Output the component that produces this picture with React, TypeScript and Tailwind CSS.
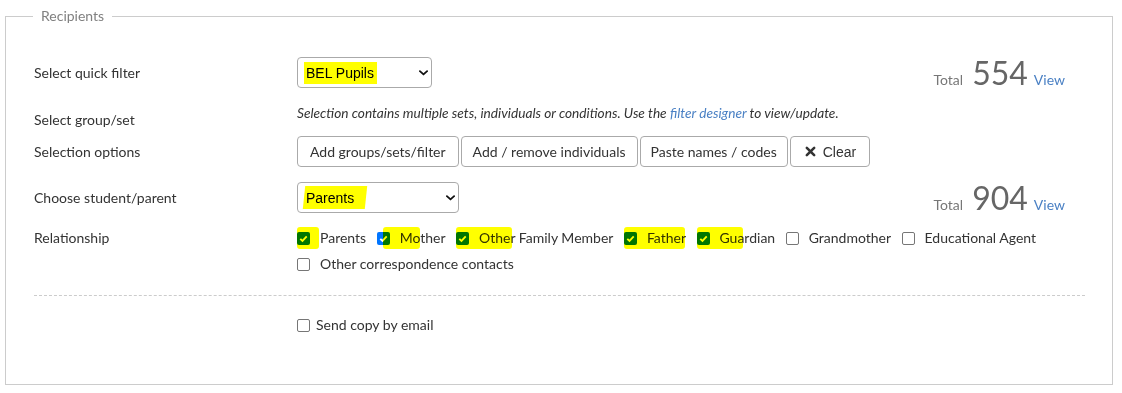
import type { ReactNode } from "react";

const RELATIONS: {
  label: string;
  checked?: boolean;
  hl?: [number, number];
}[] = [
  { label: "Parents", checked: true, hl: [0, 22] },
  { label: "Mother", checked: true, hl: [6, 37] },
  { label: "Other Family Member", checked: true, hl: [0, 56] },
  { label: "Father", checked: true, hl: [0, 61] },
  { label: "Guardian", checked: true, hl: [0, 46] },
  { label: "Grandmother" },
  { label: "Educational Agent" },
  { label: "Other correspondence contacts" },
];

export default function App() {
  return (
    <div className="bg-white w-[1122px] h-[393px] pl-[5px] pt-[6px] font-[Lato,'Liberation_Sans',sans-serif] text-[14px] leading-[20px] text-[#333]">
      <fieldset className="w-[1108px] border border-[#ccc] pl-[28px] pr-[27px] pb-[49px]">
        <legend className="-ml-px px-[8px] text-[#808080] leading-[20px]">
          Recipients
        </legend>

        <div className="mt-[31px] flex items-center h-[31px]">
          <div className="w-[263px]">Select quick filter</div>
          <Select width="w-[135px]">
            <span className="bg-[#ffff00] pl-[2px] pr-[3px] py-[1px]">BEL Pupils</span>
          </Select>
          <Total value="554" />
        </div>

        <div className="flex items-start h-[48px]">
          <div className="w-[263px] mt-[22px]">Select group/set</div>
          <div className="mt-[15px] text-[13.7px] italic">
            Selection contains multiple sets, individuals or conditions. Use the{" "}
            <a className="text-[#4a80c4]">filter designer</a> to view/update.
          </div>
        </div>

        <div className="flex items-center h-[31px]">
          <div className="w-[263px]">Selection options</div>
          <div className="flex gap-[2px]">
            <Button className="px-[12px]">Add groups/sets/filter</Button>
            <Button className="px-[11px]">Add / remove individuals</Button>
            <Button className="px-[10px]">Paste names / codes</Button>
            <Button className="px-[12px]">
              <span className="flex items-center gap-[7px] font-['Liberation_Sans',Arial,sans-serif] pl-[2px] pr-[1px]">
                <svg viewBox="0 0 12 12" className="w-[11px] h-[11px]">
                  <path
                    d="M2 2l8 8M10 2l-8 8"
                    stroke="#333"
                    strokeWidth={2.8}
                    strokeLinecap="round"
                  />
                </svg>
                Clear
              </span>
            </Button>
          </div>
        </div>

        <div className="mt-[15px] flex items-center h-[31px]">
          <div className="w-[263px]">Choose student/parent</div>
          <Select width="w-[162px]">
            <span className="bg-[#ffff00] pl-[2px] pr-[12px] pt-[2px] pb-[1px] -skew-x-6 inline-block">
              <span className="inline-block skew-x-6">Parents</span>
            </span>
          </Select>
          <Total value="904" />
        </div>

        <div className="mt-[12px] flex items-start">
          <div className="w-[263px] leading-[26px]">Relationship</div>
          <div className="flex-1 flex flex-wrap">
            {RELATIONS.map((r) => (
              <label
                key={r.label}
                className="relative h-[26px] inline-flex items-center mr-[10.5px]"
              >
                <Box checked={r.checked} />
                <span className="ml-[10px]">{r.label}</span>
                {r.hl && (
                  <span
                    className="absolute top-[2px] h-[22px] bg-[#ffff00] mix-blend-multiply rounded-[3px]"
                    style={{ left: r.hl[0], width: r.hl[1] }}
                  />
                )}
              </label>
            ))}
          </div>
        </div>

        <div className="mt-[18px] border-t border-dashed border-[#ccc]" />

        <div className="mt-[19px] h-[20px] pl-[263px] flex items-center">
          <Box />
          <span className="ml-[6px]">Send copy by email</span>
        </div>
      </fieldset>
    </div>
  );
}

function Select({ width, children }: { width: string; children: ReactNode }) {
  return (
    <div
      className={`${width} h-[31px] border border-[#aaa] rounded-[4px] flex items-center pl-[6px] pr-[3px] font-['Liberation_Sans',Arial,sans-serif] text-black`}
    >
      {children}
      <svg viewBox="0 0 10 6" className="ml-auto w-[9px] h-[6px]">
        <path
          d="M1 1l4 3.6 4-3.6"
          fill="none"
          stroke="#111"
          strokeWidth={2}
          strokeLinecap="round"
          strokeLinejoin="round"
        />
      </svg>
    </div>
  );
}

function Button({
  className,
  children,
}: {
  className: string;
  children: ReactNode;
}) {
  return (
    <button
      type="button"
      className={`h-[31px] ${className} border border-[#aaa] rounded-[4px] bg-white text-[#333] flex items-center`}
    >
      {children}
    </button>
  );
}

function Total({ value }: { value: string }) {
  return (
    <div className="ml-auto mr-[20px] flex items-baseline">
      <span className="text-[#777]">Total</span>
      <span className="ml-[9px] text-[32px] leading-[34px] text-[#666]">{value}</span>
      <a className="ml-[6px] text-[#4a80c4]">View</a>
    </div>
  );
}

function Box({ checked }: { checked?: boolean }) {
  if (checked) {
    return (
      <span className="w-[13px] h-[13px] rounded-[2px] bg-[#0075ff] flex items-center justify-center shrink-0">
        <svg viewBox="0 0 12 12" className="w-[11px] h-[11px]">
          <path
            d="M2.5 6.3l2.4 2.4 4.6-5"
            fill="none"
            stroke="white"
            strokeWidth={2}
          />
        </svg>
      </span>
    );
  }
  return (
    <span className="w-[13px] h-[13px] rounded-[2px] border border-[#767676] bg-white shrink-0" />
  );
}
